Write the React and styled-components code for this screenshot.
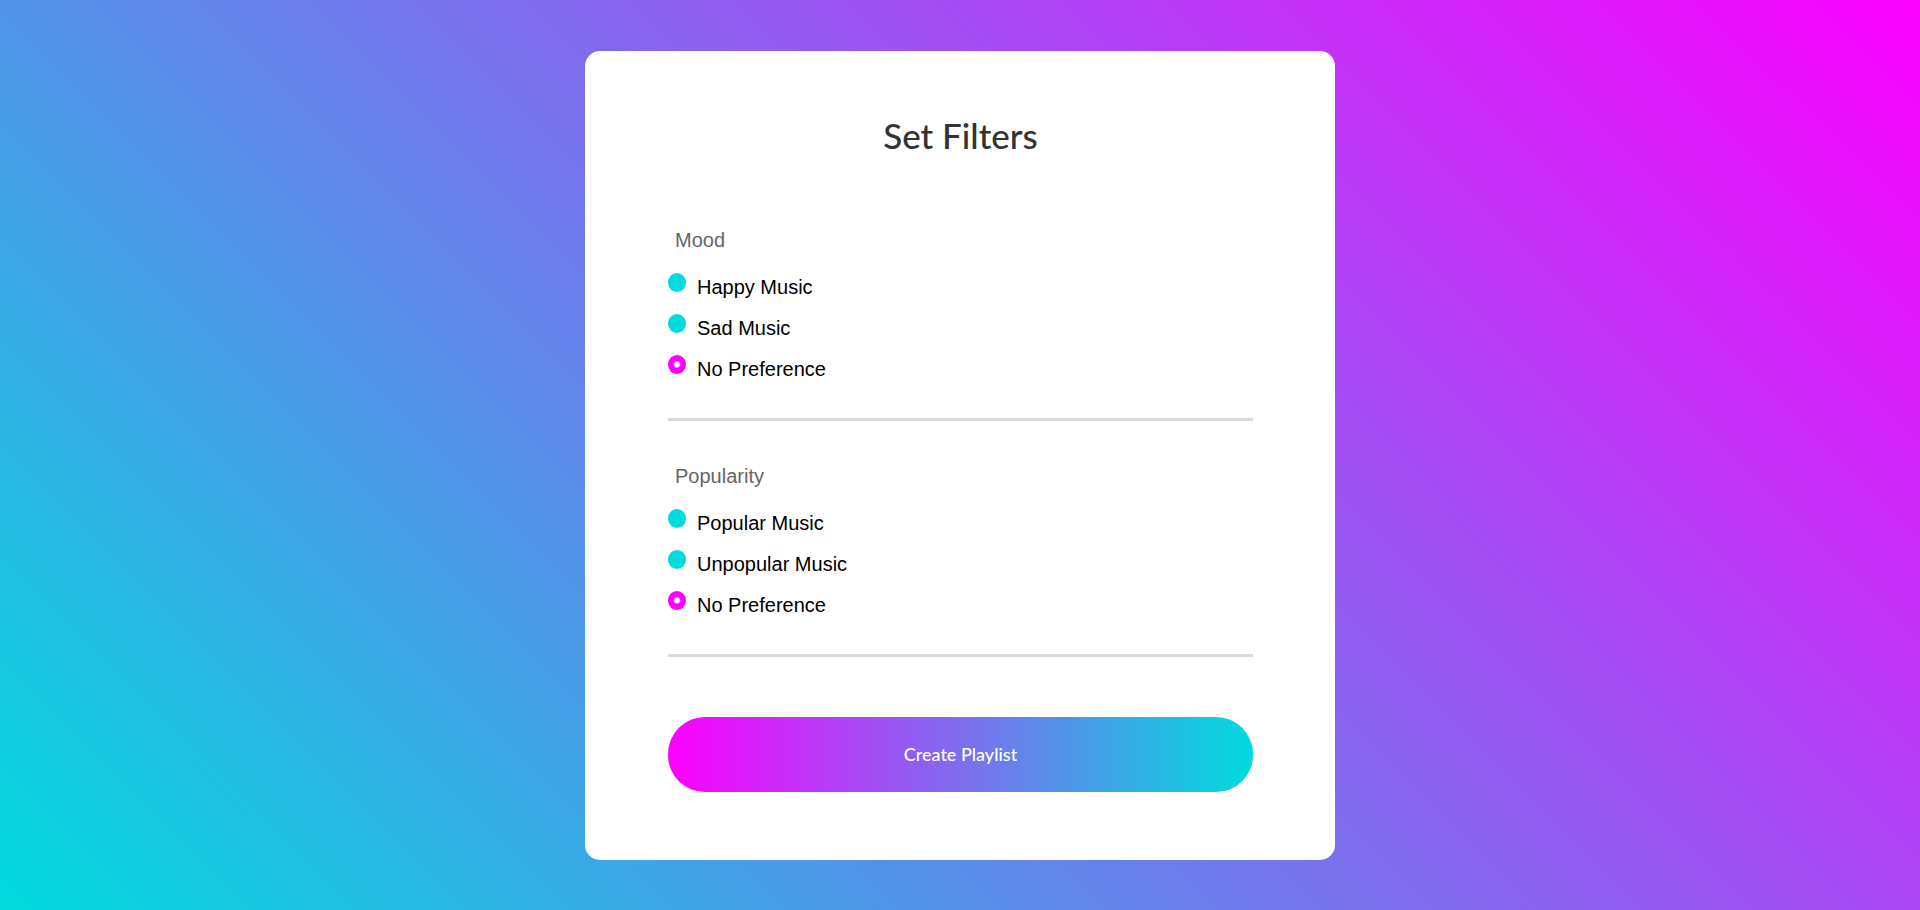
import React from "react";
import styled, { createGlobalStyle } from "styled-components";

const GlobalStyle = createGlobalStyle`
  *, *::before, *::after { box-sizing: border-box; }
  body {
    margin: 0;
    font-family: Arial, "Liberation Sans", sans-serif;
    font-size: 20px;
    line-height: 24px;
  }
`;

const displayFont = `"Gill Sans MT", "Gill Sans", Lato, sans-serif`;

const Page = styled.main`
  min-height: 100vh;
  padding: 50px 16px;
  display: flex;
  justify-content: center;
  align-items: center;
  background: linear-gradient(45deg, #00dbde, #fc00ff);
`;

const Card = styled.form`
  width: 100%;
  max-width: 750px;
  padding: 62px 82px 68px 83px;
  border-radius: 15px;
  background: #fff;
`;

const Title = styled.h1`
  margin: 0 0 70px;
  font-family: ${displayFont};
  font-size: 35px;
  line-height: 45px;
  font-weight: 500;
  text-align: center;
  color: #333;
`;

const Sections = styled.div`
  display: flex;
  flex-direction: column;
  gap: 43px;
  margin-bottom: 60px;
`;

const FilterGroup = styled.fieldset`
  min-width: 0;
  margin: 0;
  padding: 0 0 37px;
  border: 0;
  border-bottom: 3px solid #d9d9d9;
`;

const GroupName = styled.legend`
  margin-bottom: 21px;
  padding: 0 7px;
  color: #666;
`;

const Options = styled.div`
  display: flex;
  flex-direction: column;
  align-items: flex-start;
  gap: 15px;
`;

const Option = styled.label`
  display: flex;
  align-items: flex-start;
  gap: 11px;
  color: #000;
  cursor: pointer;
`;

const OptionText = styled.span`
  padding-top: 2px;
`;

const Radio = styled.input`
  appearance: none;
  flex: none;
  width: 18px;
  height: 19px;
  margin: 0;
  border-radius: 50%;
  background: #00dbde;
  cursor: pointer;

  &:checked {
    background: radial-gradient(circle, #fff 2px, #fc00ff 4px);
  }
`;

const SubmitButton = styled.button`
  display: block;
  width: 100%;
  height: 75px;
  padding: 0 20px;
  border: 0;
  border-radius: 37px;
  background: linear-gradient(90deg, #fc00ff, #00dbde);
  font-family: ${displayFont};
  font-size: 18px;
  line-height: 24px;
  font-weight: 500;
  color: #fff;
  cursor: pointer;
`;

const filters = [
  { name: "mood", label: "Mood", options: ["Happy Music", "Sad Music", "No Preference"] },
  { name: "popularity", label: "Popularity", options: ["Popular Music", "Unpopular Music", "No Preference"] },
];

export default function App() {
  return (
    <>
      <GlobalStyle />
      <Page>
        <Card onSubmit={(event) => event.preventDefault()}>
          <Title>Set Filters</Title>
          <Sections>
            {filters.map(({ name, label, options }) => (
              <FilterGroup key={name}>
                <GroupName>{label}</GroupName>
                <Options>
                  {options.map((option) => (
                    <Option key={option}>
                      <Radio
                        type="radio"
                        name={name}
                        value={option}
                        defaultChecked={option === "No Preference"}
                      />
                      <OptionText>{option}</OptionText>
                    </Option>
                  ))}
                </Options>
              </FilterGroup>
            ))}
          </Sections>
          <SubmitButton type="submit">Create Playlist</SubmitButton>
        </Card>
      </Page>
    </>
  );
}
